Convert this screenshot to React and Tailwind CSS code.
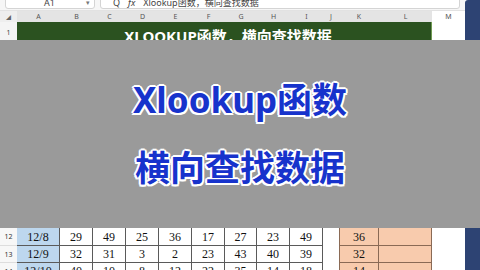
import React from "react";

const serif = { fontFamily: '"Liberation Serif", "Noto Serif CJK SC", serif' };

const dataCols = [
  { w: "w-[43px]", kind: "a" },
  { w: "w-[33px]" },
  { w: "w-[33px]" },
  { w: "w-[33px]" },
  { w: "w-[33px]" },
  { w: "w-[33px]" },
  { w: "w-[32px]" },
  { w: "w-[33px]" },
  { w: "w-[33px]" },
  { w: "w-[16px]", kind: "j" },
  { w: "w-[40px]", kind: "k" },
  { w: "w-[53px]", kind: "l" },
  { w: "w-[33px]", kind: "m" },
];

const letters = ["A", "B", "C", "D", "E", "F", "G", "H", "I", "J", "K", "L", "M"];

const rows = [
  { n: "12", h: "h-[18px]", v: ["12/8", "29", "49", "25", "36", "17", "27", "23", "49", "", "36", "", ""] },
  { n: "13", h: "h-[17px]", v: ["12/9", "32", "31", "3", "2", "23", "43", "40", "39", "", "32", "", ""] },
  { n: "14", h: "h-[17px]", v: ["12/10", "40", "10", "8", "12", "22", "35", "14", "18", "", "14", "", ""] },
];

function cellClass(kind) {
  if (kind === "a") return "bg-[#bdd7ee] border-r border-b border-[#5a5a5a]";
  if (kind === "j") return "bg-white";
  if (kind === "k") return "bg-[#f8cbad] border-l border-r border-b border-[#8a6a55]";
  if (kind === "l") return "bg-[#f8cbad] border-r border-b border-[#8a6a55]";
  if (kind === "m") return "bg-white";
  return "bg-white border-r border-b border-[#5a5a5a]";
}

export default function App() {
  return (
    <div
      className="w-[480px] h-[270px] overflow-hidden flex flex-col bg-white"
      style={{ fontFamily: '"Noto Sans", "Noto Sans CJK SC", sans-serif' }}
    >
      {/* Top: formula bar, headers, title row */}
      <div className="flex h-[40px] shrink-0">
        <div className="w-[465px] flex flex-col">
          {/* formula bar */}
          <div className="h-[11px] bg-[#f6f6f6] flex gap-[5px] px-[5px] overflow-hidden border-b border-[#e2e2e2]">
            <div className="w-[90px] h-[20px] -mt-[11px] bg-white border border-[#d4d4d4] rounded-[3px] flex items-center pl-[38px] pr-[4px] text-[9px] text-[#444] leading-none">
              <span className="mt-[6px]">A1</span>
              <span className="ml-auto mt-[6px] text-[7px] text-[#777]">▾</span>
            </div>
            <div className="flex-1 h-[20px] -mt-[11px] bg-white border border-[#d4d4d4] rounded-[3px] flex items-center pl-[12px] gap-[8px] text-[9px] text-[#444] leading-none">
              <span className="mt-[6px]">Q</span>
              <span className="mt-[6px] italic">fx</span>
              <span className="mt-[6px]">Xlookup函数，横向查找数据</span>
            </div>
          </div>
          {/* column headers */}
          <div className="h-[11px] flex bg-white">
            <div className="w-[17px] bg-[#eeeeee] flex items-end justify-center pb-[2px]">
              <span className="text-[5px] text-[#666] leading-none">◢</span>
            </div>
            <div className="w-[415px] bg-[#e4e4e4] flex">
              {dataCols.slice(0, 12).map((c, i) => (
                <div key={i} className={`${c.w} flex items-center justify-center text-[7px] leading-none text-[#555]`}>
                  {letters[i]}
                </div>
              ))}
            </div>
            <div className="w-[33px] bg-white flex items-center justify-center text-[7px] leading-none text-[#555]">M</div>
          </div>
          {/* row 1 title */}
          <div className="h-[18px] flex">
            <div className="w-[17px] bg-[#f4f4f4] flex items-start justify-center pt-[7px] text-[7px] leading-none text-[#444]">1</div>
            <div className="w-[415px] bg-[#2b5220] border-r border-[#6f9a52] flex justify-center overflow-hidden pl-[8px]">
              <span className="text-white font-bold text-[15px] leading-none pt-[7px] whitespace-nowrap">
                XLOOKUP函数，横向查找数据
              </span>
            </div>
            <div className="w-[33px] bg-white" />
          </div>
        </div>
        <div className="w-[15px] bg-[#2d4373] rounded-tl-[3px]" />
      </div>

      {/* Gray overlay with captions */}
      <div className="h-[188px] shrink-0 bg-[#9a9a9a] flex flex-col items-center pt-[40px] gap-[28px]">
        {["Xlookup函数", "横向查找数据"].map((t) => (
          <div
            key={t}
            className="text-[35px] leading-[40px] font-bold text-[#1733cc] whitespace-nowrap [text-shadow:2px_0_0_#fff,-2px_0_0_#fff,0_2px_0_#fff,0_-2px_0_#fff,1.5px_1.5px_0_#fff,-1.5px_-1.5px_0_#fff,1.5px_-1.5px_0_#fff,-1.5px_1.5px_0_#fff]"
          >
            {t}
          </div>
        ))}
      </div>

      {/* Bottom data rows */}
      <div className="flex flex-1 overflow-hidden">
        <div className="w-[465px] flex flex-col">
          {rows.map((r) => (
            <div key={r.n} className={`${r.h} flex shrink-0`}>
              <div className="w-[17px] bg-[#f7f7f7] border-b border-[#dddddd] flex items-center justify-center text-[7px] leading-none text-[#333]">
                {r.n}
              </div>
              {dataCols.map((c, i) => (
                <div
                  key={i}
                  className={`${c.w} ${cellClass(c.kind)} flex items-center justify-center text-[12px] leading-none text-[#111]`}
                  style={serif}
                >
                  {r.v[i]}
                </div>
              ))}
            </div>
          ))}
        </div>
        <div className="w-[15px] bg-[#2d4373]" />
      </div>
    </div>
  );
}
